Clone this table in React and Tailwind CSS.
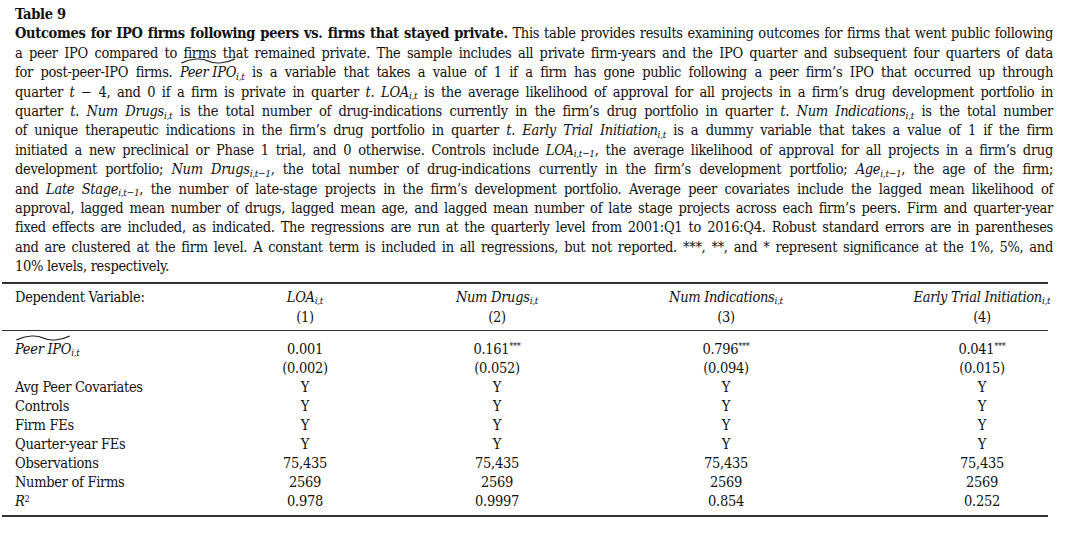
const V = ({ name, sub }) => (
  <>
    <span className="italic">{name}</span>
    <sub className="italic text-[10px]">{sub}</sub>
  </>
);

const PeerIPO = () => (
  <>
    <span className="relative inline-block italic">
      Peer IPO
      <svg
        className="absolute left-0 -top-[5px] w-full h-[6px]"
        viewBox="0 0 40 6"
        preserveAspectRatio="none"
      >
        <path
          d="M1 5 C8 0, 16 0, 20 3 S32 6, 39 1"
          fill="none"
          stroke="#222"
          strokeWidth="1"
        />
      </svg>
    </span>
    <sub className="italic text-[10px]">i,t</sub>
  </>
);

const lines = [
  <>
    <span className="font-bold">
      Outcomes for IPO firms following peers vs. firms that stayed private.
    </span>{" "}
    This table provides results examining outcomes for firms that went public following
  </>,
  <>
    a peer IPO compared to firms that remained private. The sample includes all private
    firm-years and the IPO quarter and subsequent four quarters of data
  </>,
  <>
    for post-peer-IPO firms. <PeerIPO /> is a variable that takes a value of 1 if a firm has
    gone public following a peer firm’s IPO that occurred up through
  </>,
  <>
    quarter <i>t</i> − 4, and 0 if a firm is private in quarter <i>t</i>.{" "}
    <V name="LOA" sub="i,t" /> is the average likelihood of approval for all projects in a
    firm’s drug development portfolio in
  </>,
  <>
    quarter <i>t</i>. <V name="Num Drugs" sub="i,t" /> is the total number of
    drug-indications currently in the firm’s drug portfolio in quarter <i>t</i>.{" "}
    <V name="Num Indications" sub="i,t" /> is the total number
  </>,
  <>
    of unique therapeutic indications in the firm’s drug portfolio in quarter <i>t</i>.{" "}
    <V name="Early Trial Initiation" sub="i,t" /> is a dummy variable that takes a value of 1
    if the firm
  </>,
  <>
    initiated a new preclinical or Phase 1 trial, and 0 otherwise. Controls include{" "}
    <V name="LOA" sub="i,t−1" />, the average likelihood of approval for all projects in a
    firm’s drug
  </>,
  <>
    development portfolio; <V name="Num Drugs" sub="i,t−1" />, the total number of
    drug-indications currently in the firm’s development portfolio;{" "}
    <V name="Age" sub="i,t−1" />, the age of the firm;
  </>,
  <>
    and <V name="Late Stage" sub="i,t−1" />, the number of late-stage projects in the firm’s
    development portfolio. Average peer covariates include the lagged mean likelihood of
  </>,
  <>
    approval, lagged mean number of drugs, lagged mean age, and lagged mean number of late
    stage projects across each firm’s peers. Firm and quarter-year
  </>,
  <>
    fixed effects are included, as indicated. The regressions are run at the quarterly level
    from 2001:Q1 to 2016:Q4. Robust standard errors are in parentheses
  </>,
  <>
    and are clustered at the firm level. A constant term is included in all regressions, but
    not reported. ***, **, and * represent significance at the 1%, 5%, and
  </>,
];

const rows = [
  ["Avg Peer Covariates", "Y", "Y", "Y", "Y"],
  ["Controls", "Y", "Y", "Y", "Y"],
  ["Firm FEs", "Y", "Y", "Y", "Y"],
  ["Quarter-year FEs", "Y", "Y", "Y", "Y"],
  ["Observations", "75,435", "75,435", "75,435", "75,435"],
  ["Number of Firms", "2569", "2569", "2569", "2569"],
];

// wrap content in a span so sub/sup keep their inline alignment inside the flex cell
const Cell = ({ children, last }) => (
  <div className={`flex justify-center whitespace-nowrap ${last ? "pl-[58px]" : ""}`}>
    <span>{children}</span>
  </div>
);

const Stars = () => <sup className="text-[9px]">***</sup>;

export default function App() {
  return (
    <div
      className="w-[1080px] h-[539px] bg-white text-[#111] text-[14.5px] tracking-[-0.3px] overflow-hidden"
      style={{ fontFamily: '"DejaVu Serif Condensed", "DejaVu Serif", serif' }}
    >
      {/* caption */}
      <div className="pl-[15px] pr-[27px] pt-[4px] leading-[19.4px]">
        <div className="font-bold">Table 9</div>
        {lines.map((l, i) => (
          <div key={i} className="text-justify [text-align-last:justify]">
            {l}
          </div>
        ))}
        <div>10% levels, respectively.</div>
      </div>

      {/* table */}
      <div className="ml-[2px] w-[1046px] mt-[5px] border-t-2 border-b-2 border-[#333]">
        <div className="grid grid-cols-[208px_190px_194px_264px_190px] leading-[20px] pt-[3px] pb-[3px] border-b-[1.5px] border-[#333]">
          <div className="pl-[13px]">Dependent Variable:</div>
          <Cell>
            <V name="LOA" sub="i,t" />
          </Cell>
          <Cell>
            <V name="Num Drugs" sub="i,t" />
          </Cell>
          <Cell>
            <V name="Num Indications" sub="i,t" />
          </Cell>
          <Cell last>
            <V name="Early Trial Initiation" sub="i,t" />
          </Cell>
          <div />
          <Cell>(1)</Cell>
          <Cell>(2)</Cell>
          <Cell>(3)</Cell>
          <Cell last>(4)</Cell>
        </div>

        <div className="grid grid-cols-[208px_190px_194px_264px_190px] leading-[19.1px] pt-[9px] pb-[3px]">
          <div className="pl-[13px]">
            <PeerIPO />
          </div>
          <Cell>0.001</Cell>
          <Cell>
            0.161
            <Stars />
          </Cell>
          <Cell>
            0.796
            <Stars />
          </Cell>
          <Cell last>
            0.041
            <Stars />
          </Cell>
          <div />
          <Cell>(0.002)</Cell>
          <Cell>(0.052)</Cell>
          <Cell>(0.094)</Cell>
          <Cell last>(0.015)</Cell>
          {rows.map((r) => (
            <div key={r[0]} className="contents">
              <div className="pl-[13px]">{r[0]}</div>
              <Cell>{r[1]}</Cell>
              <Cell>{r[2]}</Cell>
              <Cell>{r[3]}</Cell>
              <Cell last>{r[4]}</Cell>
            </div>
          ))}
          <div className="pl-[13px]">
            <i>R</i>
            <sup className="text-[9px]">2</sup>
          </div>
          <Cell>0.978</Cell>
          <Cell>0.9997</Cell>
          <Cell>0.854</Cell>
          <Cell last>0.252</Cell>
        </div>
      </div>
    </div>
  );
}
